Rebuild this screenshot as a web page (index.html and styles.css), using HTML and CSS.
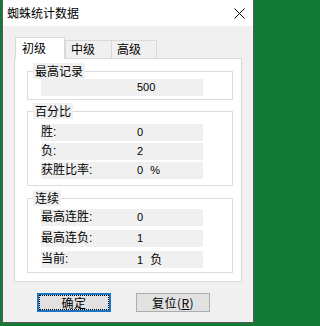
FILE: index.html
```html
<!DOCTYPE html>
<html lang="zh-CN">
<head>
<meta charset="utf-8">
<title>蜘蛛统计数据</title>
<link rel="stylesheet" href="styles.css">
</head>
<body>
<div class="window">
  <div class="titlebar">
    <span class="title">蜘蛛统计数据</span>
    <svg class="close" width="11" height="11" viewBox="0 0 11 11"><path d="M0.5 0.5 L10.5 10.5 M10.5 0.5 L0.5 10.5" stroke="#000" stroke-width="1" fill="none"/></svg>
  </div>
  <div class="client">
    <div class="tabs">
      <div class="tab active">初级</div>
      <div class="tab mid">中级</div>
      <div class="tab last">高级</div>
    </div>
    <div class="panel">
      <fieldset class="group g1">
        <legend>最高记录</legend>
        <div class="row"><span class="label"></span><span class="value">500</span></div>
      </fieldset>
      <fieldset class="group g2">
        <legend>百分比</legend>
        <div class="row"><span class="label">胜:</span><span class="value">0</span></div>
        <div class="row"><span class="label">负:</span><span class="value">2</span></div>
        <div class="row"><span class="label">获胜比率:</span><span class="value">0 %</span></div>
      </fieldset>
      <fieldset class="group g3">
        <legend>连续</legend>
        <div class="row"><span class="label">最高连胜:</span><span class="value">0</span></div>
        <div class="row"><span class="label">最高连负:</span><span class="value">1</span></div>
        <div class="row"><span class="label">当前:</span><span class="value">1 <span class="cjk">负</span></span></div>
      </fieldset>
    </div>
    <div class="buttons">
      <button class="btn default"><span class="focus">确定</span></button>
      <button class="btn">复位(<u>R</u>)</button>
    </div>
  </div>
</div>
</body>
</html>
```

FILE: styles.css
```css
html, body {
  margin: 0;
  padding: 0;
}
body {
  width: 257px;
  height: 326px;
  overflow: hidden;
  background: #137a36;
  font-family: "Noto Sans CJK SC", "Liberation Sans", sans-serif;
  font-size: 12px;
  color: #000;
}
.window {
  box-sizing: border-box;
  margin-left: 2px;
  width: 252px;
  height: 323px;
  background: #f0f0f0;
  border: 1px solid #5a5a5a;
  border-top: none;
}
.titlebar {
  height: 26px;
  background: #fff;
  display: flex;
  align-items: center;
  padding-left: 4px;
}
.title {
  line-height: 16px;
  font-size: 12px;
}
.close {
  margin-left: auto;
  margin-right: 8px;
  display: block;
}
.client {
  padding: 11px 11px 0 11px;
}
.tabs {
  position: relative;
  z-index: 1;
  display: flex;
  align-items: flex-end;
  height: 22px;
  margin-bottom: -1px;
}
.tab {
  box-sizing: border-box;
  line-height: 16px;
  font-size: 12px;
  border: 1px solid #d9d9d9;
  border-bottom: none;
  background: #f0f0f0;
}
.tab.active {
  margin-left: 1px;
  width: 50px;
  height: 22px;
  background: #fff;
  padding: 2px 0 0 6px;
}
.tab.mid {
  width: 46px;
  height: 18px;
  margin-bottom: 1px;
  border-right: none;
  padding: 0 0 0 5px;
}
.tab.last {
  width: 46px;
  height: 18px;
  margin-bottom: 1px;
  padding: 0 0 0 5px;
}
.panel {
  box-sizing: border-box;
  width: 228px;
  background: #fff;
  border: 1px solid #d9d9d9;
  padding: 4px 8px 8px 12px;
}
.group {
  margin: 0;
  min-width: 0;
  border: 1px solid #dcdcdc;
  padding: 0;
}
.group legend {
  margin-left: 5px;
  padding: 0 2px;
  background: #f0f0f0;
  line-height: 16px;
  font-size: 12px;
}
.g1 {
  padding-bottom: 3px;
}
.g2 {
  margin-top: 3px;
  padding-top: 5px;
  padding-bottom: 6px;
}
.g2 .row + .row {
  margin-top: 2px;
}
.g3 {
  margin-top: 4px;
  padding-top: 3px;
  padding-bottom: 4px;
}
.g3 .row + .row {
  margin-top: 4px;
}
.row {
  display: flex;
  align-items: center;
  margin-left: 13px;
  width: 162px;
  height: 17px;
  background: #f0f0f0;
  font-family: "Liberation Sans", "Noto Sans CJK SC", sans-serif;
}
.label {
  width: 96px;
  flex: none;
  font-size: 12px;
  line-height: 15px;
  word-spacing: 0;
}
.label::first-letter {
  letter-spacing: 0;
}
.value {
  font-size: 11px;
  line-height: 15px;
  word-spacing: 4px;
}
.cjk {
  font-family: "Noto Sans CJK SC", sans-serif;
  font-size: 12px;
}
.buttons {
  display: flex;
  gap: 25px;
  margin-top: 11px;
  padding-left: 23px;
}
.btn {
  box-sizing: border-box;
  width: 74px;
  height: 19px;
  padding: 0;
  margin: 0;
  background: #e1e1e1;
  border: 1px solid #adadad;
  font-family: "Noto Sans CJK SC", "Liberation Sans", sans-serif;
  font-size: 12px;
  line-height: 15px;
  color: #000;
  text-align: center;
  letter-spacing: 0.5px;
}
.btn.default {
  border: 2px solid #1c74c4;
}
.focus {
  box-sizing: border-box;
  display: block;
  height: 100%;
  border: 1px dotted #000;
  line-height: 13px;
}
```
